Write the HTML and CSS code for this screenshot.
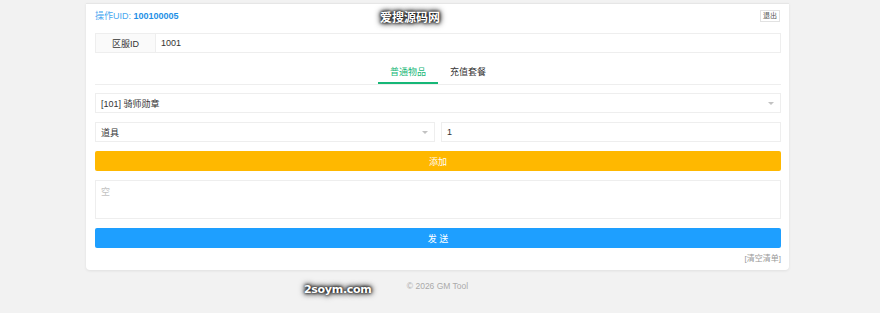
FILE: index.html
```html
<!DOCTYPE html>
<html lang="zh-CN">
<head>
    <meta charset="UTF-8">
    <meta name="viewport" content="width=device-width, initial-scale=1">
    <title>GM Tool</title>
    <link rel="stylesheet" href="styles.css">
</head>
<body>
    <div class="card">
        <div class="top-bar">
            <span class="uid">操作UID: <b>100100005</b></span>
            <button class="logout">退出</button>
        </div>

        <div class="field-row">
            <label class="field-label">区服ID</label>
            <div class="field-input">1001</div>
        </div>

        <div class="tabs">
            <span class="tab active">普通物品</span>
            <span class="tab">充值套餐</span>
        </div>

        <div class="select full">[101] 骑师勋章<i class="arrow"></i></div>

        <div class="split">
            <div class="select">道具<i class="arrow"></i></div>
            <div class="field-input box">1</div>
        </div>

        <button class="btn btn-warm">添加</button>

        <div class="textarea">空</div>

        <button class="btn btn-blue">发 送</button>

        <div class="clear-row"><a class="clear-link">[清空清单]</a></div>
    </div>

    <div class="footer">© 2026 GM Tool</div>

    <!-- 水印 -->
    <span class="mark mark-top">爱搜源码网</span>
    <span class="mark mark-bottom">2soym.com</span>
</body>
</html>
```

FILE: styles.css
```css
/* 基础 */
body {
    margin: 0;
    padding-top: 3px;
    background-color: #f2f2f2;
    font-family: "Liberation Sans", Arial, "Noto Sans CJK SC", sans-serif;
    font-size: 9px;
    color: #333;
}
.card {
    width: 703px;
    margin-left: 86px;
    box-sizing: border-box;
    padding: 5px 8px 6px 9px;
    background: #fff;
    border-radius: 0 0 4px 4px;
    box-shadow: 0 1px 3px rgba(0, 0, 0, 0.08);
    border-top: 1px solid #e6e6e6;
}
.top-bar {
    display: flex;
    justify-content: space-between;
    align-items: center;
    height: 13px;
    margin-bottom: 11px;
}
.uid {
    color: #4aa8f0;
}
.uid b {
    color: #1e8fe6;
}
.logout {
    font-family: inherit;
    font-size: 7px;
    color: #555;
    background: #fff;
    border: 1px solid #e2e2e2;
    padding: 1px 2px;
    height: 12px;
    line-height: 8px;
    margin-right: 1px;
}

/* 输入框 */
.field-row {
    display: flex;
    height: 20px;
}
.field-label {
    width: 60px;
    flex-shrink: 0;
    display: flex;
    align-items: center;
    justify-content: center;
    background: #fafafa;
    border: 1px solid #eee;
    border-right: none;
    box-sizing: border-box;
}
.field-input {
    flex: 1;
    display: flex;
    align-items: center;
    padding-left: 5px;
    border: 1px solid #eee;
    box-sizing: border-box;
}

/* 标签页 */
.tabs {
    display: flex;
    justify-content: center;
    margin-top: 9px;
    border-bottom: 1px solid #eee;
}
.tab {
    height: 22px;
    line-height: 21px;
    padding: 0 12px;
    color: #333;
}
.tab.active {
    color: #16b777;
    border-bottom: 2px solid #16b777;
    height: 20px;
}

/* 下拉 */
.select {
    position: relative;
    height: 20px;
    display: flex;
    align-items: center;
    padding-left: 5px;
    border: 1px solid #eee;
    box-sizing: border-box;
}
.select.full {
    margin-top: 8px;
}
.arrow {
    position: absolute;
    right: 6px;
    top: 8px;
    border: 3px solid transparent;
    border-top: 3px solid #c2c2c2;
}
.split {
    display: flex;
    gap: 6px;
    margin-top: 9px;
}
.split .select {
    width: 340px;
}
.split .box {
    height: 20px;
}

/* 按钮 */
.btn {
    display: block;
    width: 100%;
    height: 20px;
    border: none;
    border-radius: 2px;
    color: #fff;
    font-family: inherit;
    font-size: 9px;
    margin-top: 9px;
}
.btn-warm {
    background-color: #ffb800;
}
.btn-blue {
    background-color: #1e9fff;
}
.textarea {
    height: 39px;
    margin-top: 9px;
    box-sizing: border-box;
    border: 1px solid #eee;
    padding: 4px 5px;
    color: #c2c2c2;
}
.clear-row {
    text-align: right;
    margin-top: 4px;
    height: 12px;
}
.clear-link {
    color: #999;
    font-size: 8px;
}
.footer {
    width: 703px;
    margin-left: 86px;
    text-align: center;
    color: #aaa;
    font-size: 8.5px;
    margin-top: 11px;
}

/* 水印 */
.mark {
    position: absolute;
    color: #fff;
    font-weight: bold;
    font-size: 12px;
    font-family: "DejaVu Sans", "Noto Sans CJK SC", sans-serif;
    text-shadow: 0 0 3px #000, 0 0 5px #000, 0 0 7px #000;
}
.mark-top {
    left: 380px;
    top: 8px;
}
.mark-bottom {
    left: 304px;
    top: 283px;
    font-size: 11px;
    letter-spacing: -0.3px;
}
```
